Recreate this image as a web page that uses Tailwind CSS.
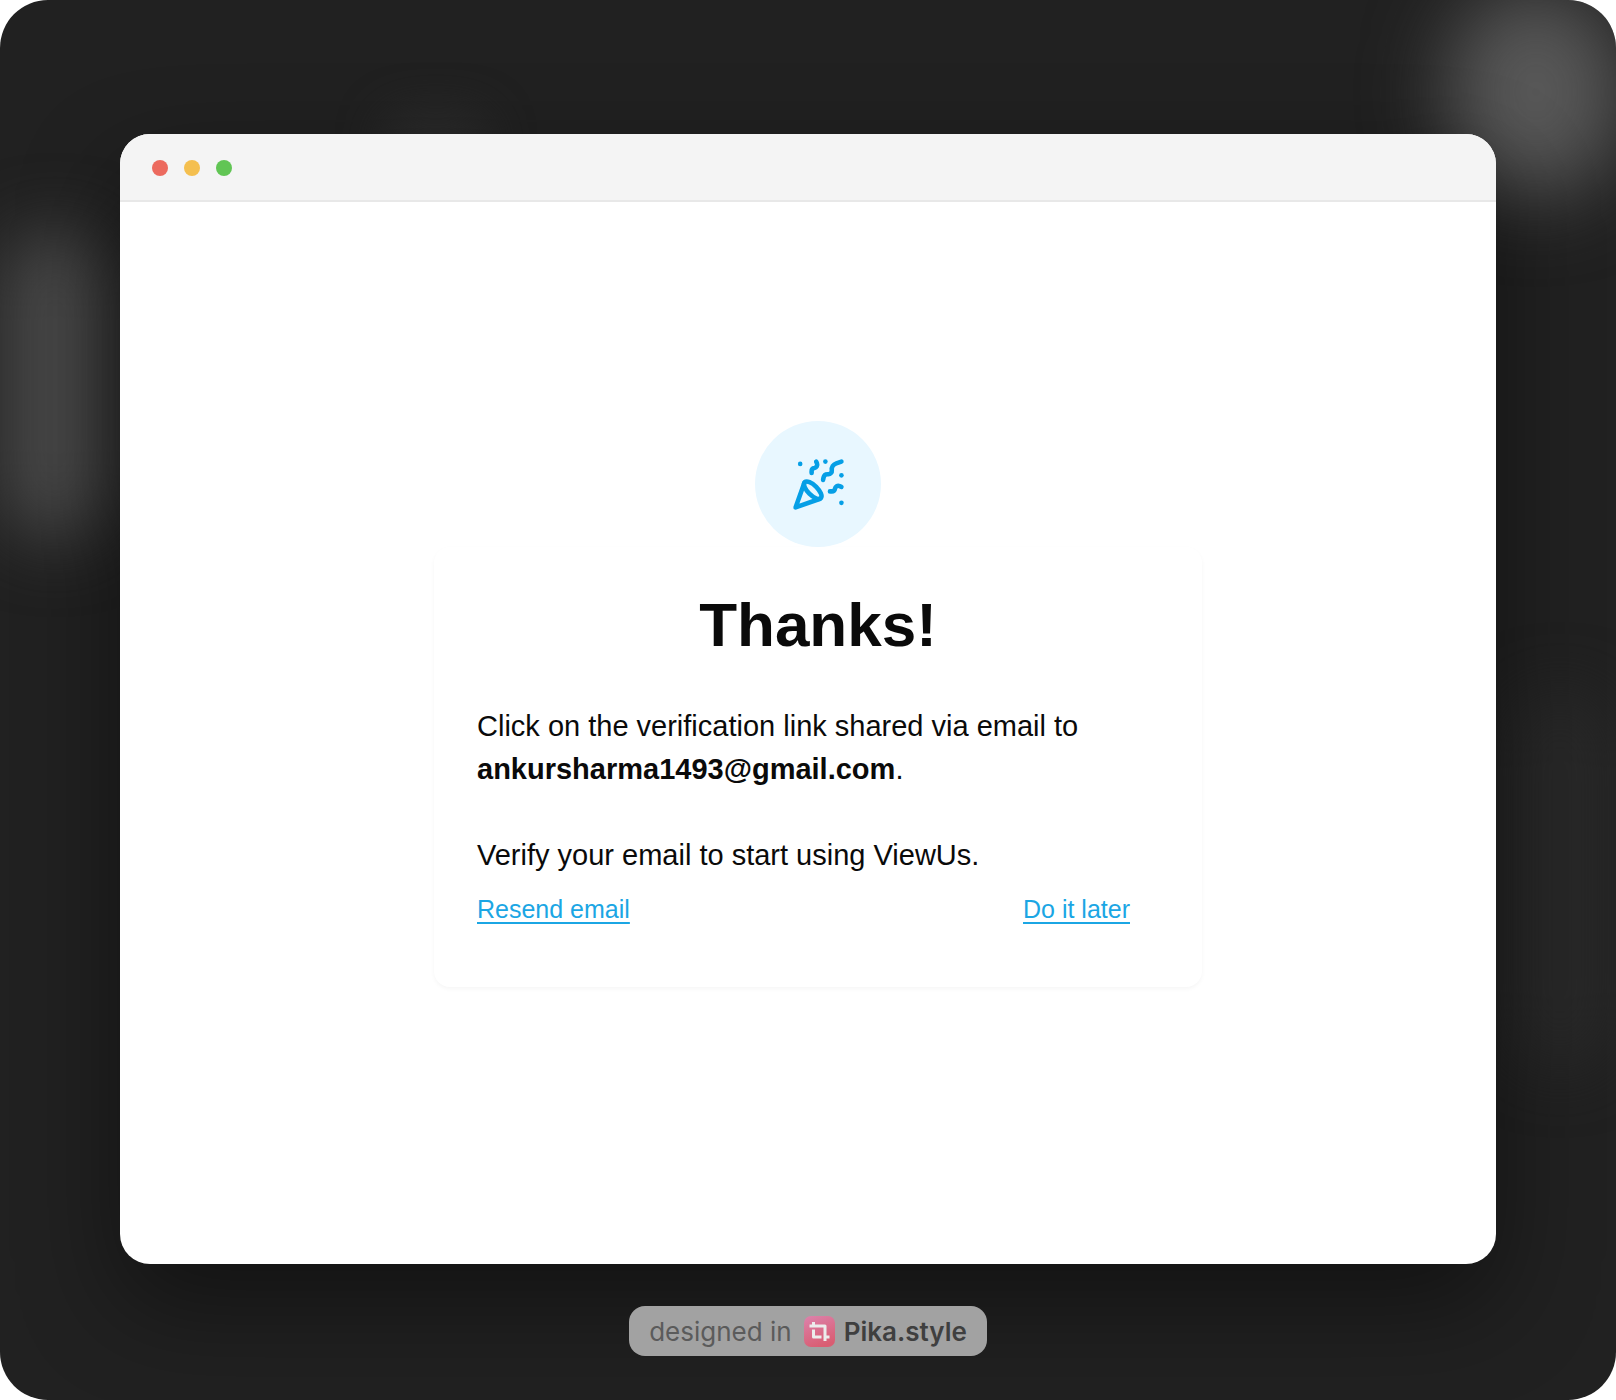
<!DOCTYPE html>
<html lang="en">
<head>
<meta charset="utf-8">
<meta name="viewport" content="width=device-width, initial-scale=1">
<title>Verify your email</title>
<script src="https://cdn.jsdelivr.net/npm/@tailwindcss/browser@4"></script>
</head>
<body class="bg-white font-['Liberation_Sans',Arial,sans-serif] text-[#0a0a0a]">
<div class="relative isolate flex min-h-screen flex-col items-center overflow-hidden rounded-[48px] bg-[#212121] px-6 pt-[134px] pb-11 md:px-[120px]">
  <!-- soft light spots of the backdrop -->
  <div class="absolute -top-3 -right-2 -z-10 h-52 w-44 rounded-full bg-[#585858] blur-[40px]" aria-hidden="true"></div>
  <div class="absolute top-[230px] left-0 -z-10 h-[310px] w-[110px] rounded-full bg-[#484848] blur-[34px]" aria-hidden="true"></div>
  <div class="absolute top-[110px] left-[380px] -z-10 h-16 w-28 rounded-full bg-[#2a2a2a] blur-[20px]" aria-hidden="true"></div>
  <div class="absolute top-[690px] right-0 -z-10 h-[380px] w-28 rounded-full bg-[#282828] blur-[30px]" aria-hidden="true"></div>

  <section class="flex w-full grow flex-col overflow-hidden rounded-[30px] bg-white shadow-[0_40px_100px_rgba(0,0,0,0.45)]">
    <header class="flex h-[68px] shrink-0 items-center gap-4 border-b-2 border-[#e8e8e8] bg-[#f4f4f4] px-8 pt-0.5">
      <span class="size-4 rounded-full bg-[#ec6a5e]"></span>
      <span class="size-4 rounded-full bg-[#f4bf4f]"></span>
      <span class="size-4 rounded-full bg-[#61c554]"></span>
    </header>
    <main class="flex grow flex-col items-center justify-center pt-[2px] pb-[60px] pl-5">
      <div class="flex size-[126px] items-center justify-center rounded-full bg-[#e8f7ff] text-[#069fe6]">
        <svg class="size-[55px]" viewBox="0 0 24 24" fill="none" stroke="currentColor" stroke-width="2" stroke-linecap="round" stroke-linejoin="round" aria-hidden="true">
          <path d="M5.8 11.3 2 22l10.700-3.790"/>
          <path d="M4 3h.01"/>
          <path d="M22 8h.01"/>
          <path d="M15 2h.01"/>
          <path d="M22 20h.01"/>
          <path d="m22 2-2.240.750a2.900 2.900 0 0 0-1.960 3.120c.1.860-.570 1.630-1.450 1.630h-.380c-.860 0-1.600.6-1.760 1.440L14 10"/>
          <path d="m22 13-.820-.330c-.860-.340-1.820.2-1.980 1.110c-.110.700-.720 1.220-1.430 1.220H17"/>
          <path d="m11 2 .330.820c.340.860-.2 1.820-1.110 1.980C9.520 4.900 9 5.520 9 6.230V7"/>
          <path d="M11 13c1.930 1.930 2.830 4.170 2 5-.830.830-3.070-.070-5-2-1.930-1.930-2.830-4.170-2-5 .830-.830 3.070.070 5 2Z"/>
        </svg>
      </div>
      <div class="w-full max-w-[768px] rounded-2xl px-[43px] pt-10 pb-[60px] shadow-[0_2px_4px_rgba(0,0,0,0.04)]">
        <h1 class="mb-[42px] text-center text-[62px] leading-[76px] font-bold">Thanks!</h1>
        <p class="text-[29px] leading-[43px]">Click on the verification link shared via email to<br><strong>ankursharma1493@gmail.com</strong>.</p>
        <p class="mt-[43px] text-[29px] leading-[43px]">Verify your email to start using ViewUs.</p>
        <div class="mt-[14px] mr-[29px] flex justify-between text-[25px] leading-9 text-[#1ba6e4]">
          <a href="#resend" class="underline decoration-2 underline-offset-4">Resend email</a>
          <a href="#later" class="underline decoration-2 underline-offset-4">Do it later</a>
        </div>
      </div>
    </main>
  </section>

  <a href="#pika" class="mt-[42px] flex h-[50px] items-center rounded-2xl bg-[#a2a2a2] px-5 font-['Inter',sans-serif] text-[26px] whitespace-nowrap text-[#5b5b5b]">
    designed in
    <svg class="mr-2 ml-3 size-8" viewBox="0 0 32 32" fill="none" aria-hidden="true">
      <defs>
        <linearGradient id="tile" x1="4" y1="0" x2="16" y2="32" gradientUnits="userSpaceOnUse"><stop stop-color="#dc82ab"/><stop offset="1" stop-color="#d95d72"/></linearGradient>
      </defs>
      <rect x="0" y="1" width="31" height="31" rx="7" fill="url(#tile)"/>
      <path d="M5.500 11H21V26M9.500 7v4M9.500 14.500v7.500h8M21 22h4.500" stroke="#ececec" stroke-width="3" stroke-linejoin="round"/>
    </svg>
    <span class="font-semibold text-[#3f3f3f]">Pika.style</span>
  </a>
</div>
</body>
</html>
